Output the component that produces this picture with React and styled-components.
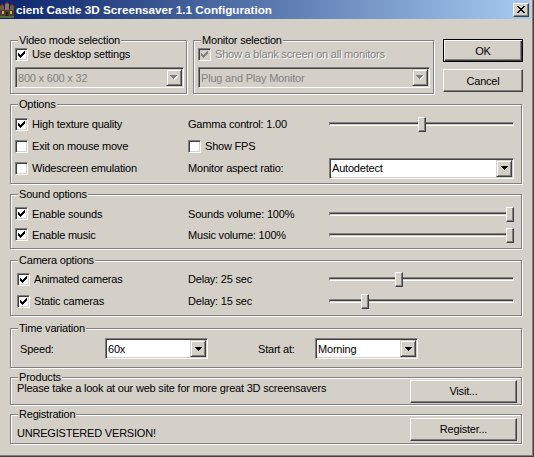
import React from 'react';
import styled, { createGlobalStyle, css } from 'styled-components';

const Global = createGlobalStyle`
  html, body { margin: 0; padding: 0; background: #d4d0c8; }
  * { box-sizing: border-box; }
`;

const Window = styled.div`
  width: 534px;
  height: 457px;
  overflow: hidden;
  background: #d4d0c8;
  border-right: 1px solid #404040;
  border-bottom: 1px solid #404040;
  box-shadow: inset -1px -1px #808080;
  padding-right: 3px;
  font-family: "Liberation Sans", Arial, sans-serif;
  font-size: 11px;
  letter-spacing: -0.2px;
  color: #000;
  display: flex;
  flex-direction: column;
`;

const TitleBar = styled.div`
  height: 19px;
  flex: none;
  display: flex;
  align-items: center;
  padding-right: 1px;
  background: linear-gradient(to right, #0a246a 0%, #a6caf0 100%);
  color: #fff;
  font-weight: bold;
  font-size: 11.7px;
  letter-spacing: 0;
  white-space: nowrap;
`;

const TitleText = styled.span`
  flex: 1;
  margin-left: 2px;
`;

const CloseButton = styled.span`
  width: 16px;
  height: 14px;
  flex: none;
  background: #d4d0c8;
  border: 1px solid;
  border-color: #fff #404040 #404040 #fff;
  box-shadow: inset -1px -1px #808080;
  display: flex;
  align-items: center;
  justify-content: center;
  padding: 0 1px 1px 0;
`;

const Body = styled.div`
  padding: 15px 0 0 10px;
  display: flex;
  flex-direction: column;
`;

const TopRow = styled.div`
  display: flex;
  align-items: flex-start;
`;

const Group = styled.fieldset`
  margin: ${p => p.$mt || 0}px ${p => p.$mr || 0}px 0 0;
  width: ${p => p.$w || 512}px;
  height: ${p => p.$h}px;
  min-width: 0;
  flex: none;
  padding: ${p => p.$pt || 0}px 4px 0 4px;
  border: 1px solid #808080;
  box-shadow: inset 1px 1px #fff, 1px 1px #fff;
`;

const Legend = styled.legend`
  padding: 0 1px;
  margin-left: 3px;
  line-height: 13px;
  background: #d4d0c8;
`;

const CheckRow = styled.label`
  display: flex;
  align-items: center;
  gap: 4px;
  height: ${p => p.$h || 14}px;
  padding-left: ${p => p.$indent || 0}px;
  white-space: nowrap;
  color: ${p => (p.$disabled ? '#808080' : '#000')};
  text-shadow: ${p => (p.$disabled ? '1px 1px #fff' : 'none')};
`;

const CheckBox = styled.span`
  width: 13px;
  height: 13px;
  flex: none;
  border: 1px solid;
  border-color: #808080 #fff #fff #808080;
  box-shadow: inset 1px 1px #404040, inset -1px -1px #d4d0c8;
  background: ${p => (p.$disabled ? '#d4d0c8' : '#fff')};
  display: flex;
  align-items: center;
  justify-content: center;
  text-shadow: none;
`;

const Combo = styled.div`
  width: ${p => p.$w}px;
  height: 21px;
  flex: none;
  margin-top: ${p => p.$mt || 0}px;
  border: 1px solid;
  border-color: #808080 #fff #fff #808080;
  box-shadow: inset 1px 1px #404040, inset -1px -1px #d4d0c8;
  background: ${p => (p.$disabled ? '#d4d0c8' : '#fff')};
  padding: 1px;
  display: flex;
  align-items: stretch;
`;

const ComboText = styled.span`
  flex: 1;
  display: flex;
  align-items: center;
  padding-left: 1px;
  color: ${p => (p.$disabled ? '#808080' : '#000')};
  white-space: nowrap;
  overflow: hidden;
`;

const ComboArrow = styled.span`
  width: 16px;
  flex: none;
  background: #d4d0c8;
  border: 1px solid;
  border-color: #d4d0c8 #404040 #404040 #d4d0c8;
  box-shadow: inset 1px 1px #fff, inset -1px -1px #808080;
  display: flex;
  align-items: center;
  justify-content: center;
`;

const ButtonColumn = styled.div`
  display: flex;
  flex-direction: column;
  gap: 7px;
  padding-top: 5px;
  margin-left: 9px;
`;

const Button = styled.button`
  width: ${p => p.$w}px;
  height: 23px;
  flex: none;
  padding: 0;
  margin: 0;
  font: inherit;
  letter-spacing: inherit;
  color: #000;
  background: #d4d0c8;
  border: 1px solid;
  border-color: #fff #404040 #404040 #fff;
  box-shadow: inset -1px -1px #808080;
  ${p =>
    p.$default &&
    css`
      border-color: #000;
      box-shadow: inset 1px 1px #fff, inset -1px -1px #404040, inset -2px -2px #808080;
    `}
`;

const OptionGrid = styled.div`
  display: grid;
  grid-template-columns: 173px 141px 185px;
  grid-auto-rows: ${p => p.$row}px;
  align-items: center;
`;

const Text = styled.span`
  white-space: nowrap;
  padding-left: ${p => p.$pl || 0}px;
`;

const SliderBox = styled.div`
  position: relative;
  height: 100%;
  display: flex;
  align-items: center;
`;

const Track = styled.div`
  width: 100%;
  height: 4px;
  border: 1px solid;
  border-color: #808080 #fff #fff #808080;
  background: #d4d0c8;
  box-shadow: inset 0 1px #404040;
`;

const Thumb = styled.span`
  position: absolute;
  top: calc(50% - 7px);
  width: 8px;
  height: 15px;
  background: #d4d0c8;
  border: 1px solid;
  border-color: #fff #404040 #404040 #fff;
  box-shadow: inset -1px -1px #808080;
`;

const TimeRow = styled.div`
  display: flex;
  align-items: center;
  height: 21px;
`;

const FieldLabel = styled.span`
  width: ${p => p.$w}px;
  flex: none;
  padding-left: ${p => p.$pl || 0}px;
  white-space: nowrap;
`;

const InfoRow = styled.div`
  display: flex;
  justify-content: space-between;
  align-items: ${p => p.$align};
  margin-top: ${p => p.$mt}px;
  padding-left: 2px;
  line-height: 13px;
`;

const InfoText = styled.span`
  white-space: nowrap;
  margin-top: ${p => p.$mtop || 0}px;
  margin-bottom: ${p => p.$mb || 0}px;
`;

const Pixels = ({ rows, color, shadow }) => {
  const h = rows.length;
  const w = rows[0].length;
  const pts = [];
  rows.forEach((r, y) => [...r].forEach((c, x) => c === '#' && pts.push([x, y])));
  const ext = shadow ? 1 : 0;
  return (
    <svg width={w + ext} height={h + ext} viewBox={`0 0 ${w + ext} ${h + ext}`} shapeRendering="crispEdges" style={{ display: 'block' }}>
      {shadow && pts.map(([x, y]) => <rect key={`s${x}-${y}`} x={x + 1} y={y + 1} width="1" height="1" fill={shadow} />)}
      {pts.map(([x, y]) => <rect key={`${x}-${y}`} x={x} y={y} width="1" height="1" fill={color} />)}
    </svg>
  );
};

const CHECK = ['......#', '.....##', '#...###', '##.###.', '#####..', '.###...', '..#....'];
const ARROW = ['#######', '.#####.', '..###..', '...#...'];
const CLOSE_X = ['##....##', '.##..##.', '..####..', '...##...', '..####..', '.##..##.', '##....##'];

const CastleIcon = () => (
  <svg width="14" height="16" viewBox="0 0 14 16" style={{ display: 'block', flex: 'none' }}>
    <rect x="0" y="7" width="14" height="8" fill="#4a3c30" />
    <rect x="0" y="4" width="4" height="4" fill="#6e5a46" />
    <rect x="5" y="2" width="4" height="6" fill="#8a7258" />
    <rect x="10" y="4" width="4" height="4" fill="#6e5a46" />
    <polygon points="5,2 7,0 9,2" fill="#c03a20" />
    <polygon points="0,4 2,2 4,4" fill="#a83020" />
    <polygon points="10,4 12,2 14,4" fill="#a83020" />
    <rect x="2" y="9" width="2" height="3" fill="#e8a840" />
    <rect x="6" y="10" width="2" height="5" fill="#2a2018" />
    <rect x="10" y="9" width="2" height="3" fill="#e8a840" />
    <rect x="0" y="14" width="14" height="2" fill="#5a6a40" />
  </svg>
);

const Check = ({ checked = true, disabled, label, indent, h }) => (
  <CheckRow $disabled={disabled} $indent={indent} $h={h}>
    <CheckBox $disabled={disabled}>
      {checked && <Pixels rows={CHECK} color={disabled ? '#808080' : '#000'} />}
    </CheckBox>
    {label}
  </CheckRow>
);

const Dropdown = ({ value, w, disabled, mt }) => (
  <Combo $w={w} $disabled={disabled} $mt={mt}>
    <ComboText $disabled={disabled}>{value}</ComboText>
    <ComboArrow>
      <Pixels rows={ARROW} color={disabled ? '#808080' : '#000'} shadow={disabled ? '#fff' : undefined} />
    </ComboArrow>
  </Combo>
);

const Slider = ({ pos }) => (
  <SliderBox>
    <Track />
    <Thumb style={{ left: `${Math.round(pos * 177)}px` }} />
  </SliderBox>
);

export default function App() {
  return (
    <>
      <Global />
      <Window>
        <TitleBar>
          <CastleIcon />
          <TitleText>cient Castle 3D Screensaver 1.1 Configuration</TitleText>
          <CloseButton>
            <Pixels rows={CLOSE_X} color="#000" />
          </CloseButton>
        </TitleBar>
        <Body>
          <TopRow>
            <Group $w={177} $h={60} $mr={6}>
              <Legend>Video mode selection</Legend>
              <Check label="Use desktop settings" />
              <Dropdown value="800 x 600 x 32" w={169} disabled mt={6} />
            </Group>
            <Group $w={241} $h={60}>
              <Legend>Monitor selection</Legend>
              <Check label="Show a blank screen on all monitors" disabled />
              <Dropdown value="Plug and Play Monitor" w={232} disabled mt={6} />
            </Group>
            <ButtonColumn>
              <Button $w={80} $default>OK</Button>
              <Button $w={80}>Cancel</Button>
            </ButtonColumn>
          </TopRow>

          <Group $mt={4} $h={86} $pt={2}>
            <Legend>Options</Legend>
            <OptionGrid $row={22}>
              <Check label="High texture quality" />
              <Text>Gamma control: 1.00</Text>
              <Slider pos={0.503} />
              <Check label="Exit on mouse move" checked={false} />
              <Check label="Show FPS" checked={false} />
              <span />
              <Check label="Widescreen emulation" checked={false} />
              <Text>Monitor aspect ratio:</Text>
              <Dropdown value="Autodetect" w={185} />
            </OptionGrid>
          </Group>

          <Group $mt={4} $h={61} $pt={2}>
            <Legend>Sound options</Legend>
            <OptionGrid $row={21}>
              <Check label="Enable sounds" />
              <Text>Sounds volume: 100%</Text>
              <Slider pos={1} />
              <Check label="Enable music" />
              <Text>Music volume: 100%</Text>
              <Slider pos={1} />
            </OptionGrid>
          </Group>

          <Group $mt={5} $h={62} $pt={1}>
            <Legend>Camera options</Legend>
            <OptionGrid $row={22}>
              <Check label="Animated cameras" indent={2} />
              <Text>Delay: 25 sec</Text>
              <Slider pos={0.373} />
              <Check label="Static cameras" indent={2} />
              <Text>Delay: 15 sec</Text>
              <Slider pos={0.18} />
            </OptionGrid>
          </Group>

          <Group $mt={6} $h={46} $pt={3}>
            <Legend>Time variation</Legend>
            <TimeRow>
              <FieldLabel $w={90} $pl={5}>Speed:</FieldLabel>
              <Dropdown value="60x" w={103} />
              <FieldLabel $w={107} $pl={50}>Start at:</FieldLabel>
              <Dropdown value="Morning" w={103} />
            </TimeRow>
          </Group>

          <Group $mt={3} $h={34}>
            <Legend>Products</Legend>
            <InfoRow $align="flex-start" $mt={-4}>
              <InfoText $mtop={2}>Please take a look at our web site for more great 3D screensavers</InfoText>
              <Button $w={107}>Visit...</Button>
            </InfoRow>
          </Group>

          <Group $mt={3} $h={36}>
            <Legend>Registration</Legend>
            <InfoRow $align="flex-end" $mt={-3}>
              <InfoText $mb={1}>UNREGISTERED VERSION!</InfoText>
              <Button $w={107}>Register...</Button>
            </InfoRow>
          </Group>
        </Body>
      </Window>
    </>
  );
}
